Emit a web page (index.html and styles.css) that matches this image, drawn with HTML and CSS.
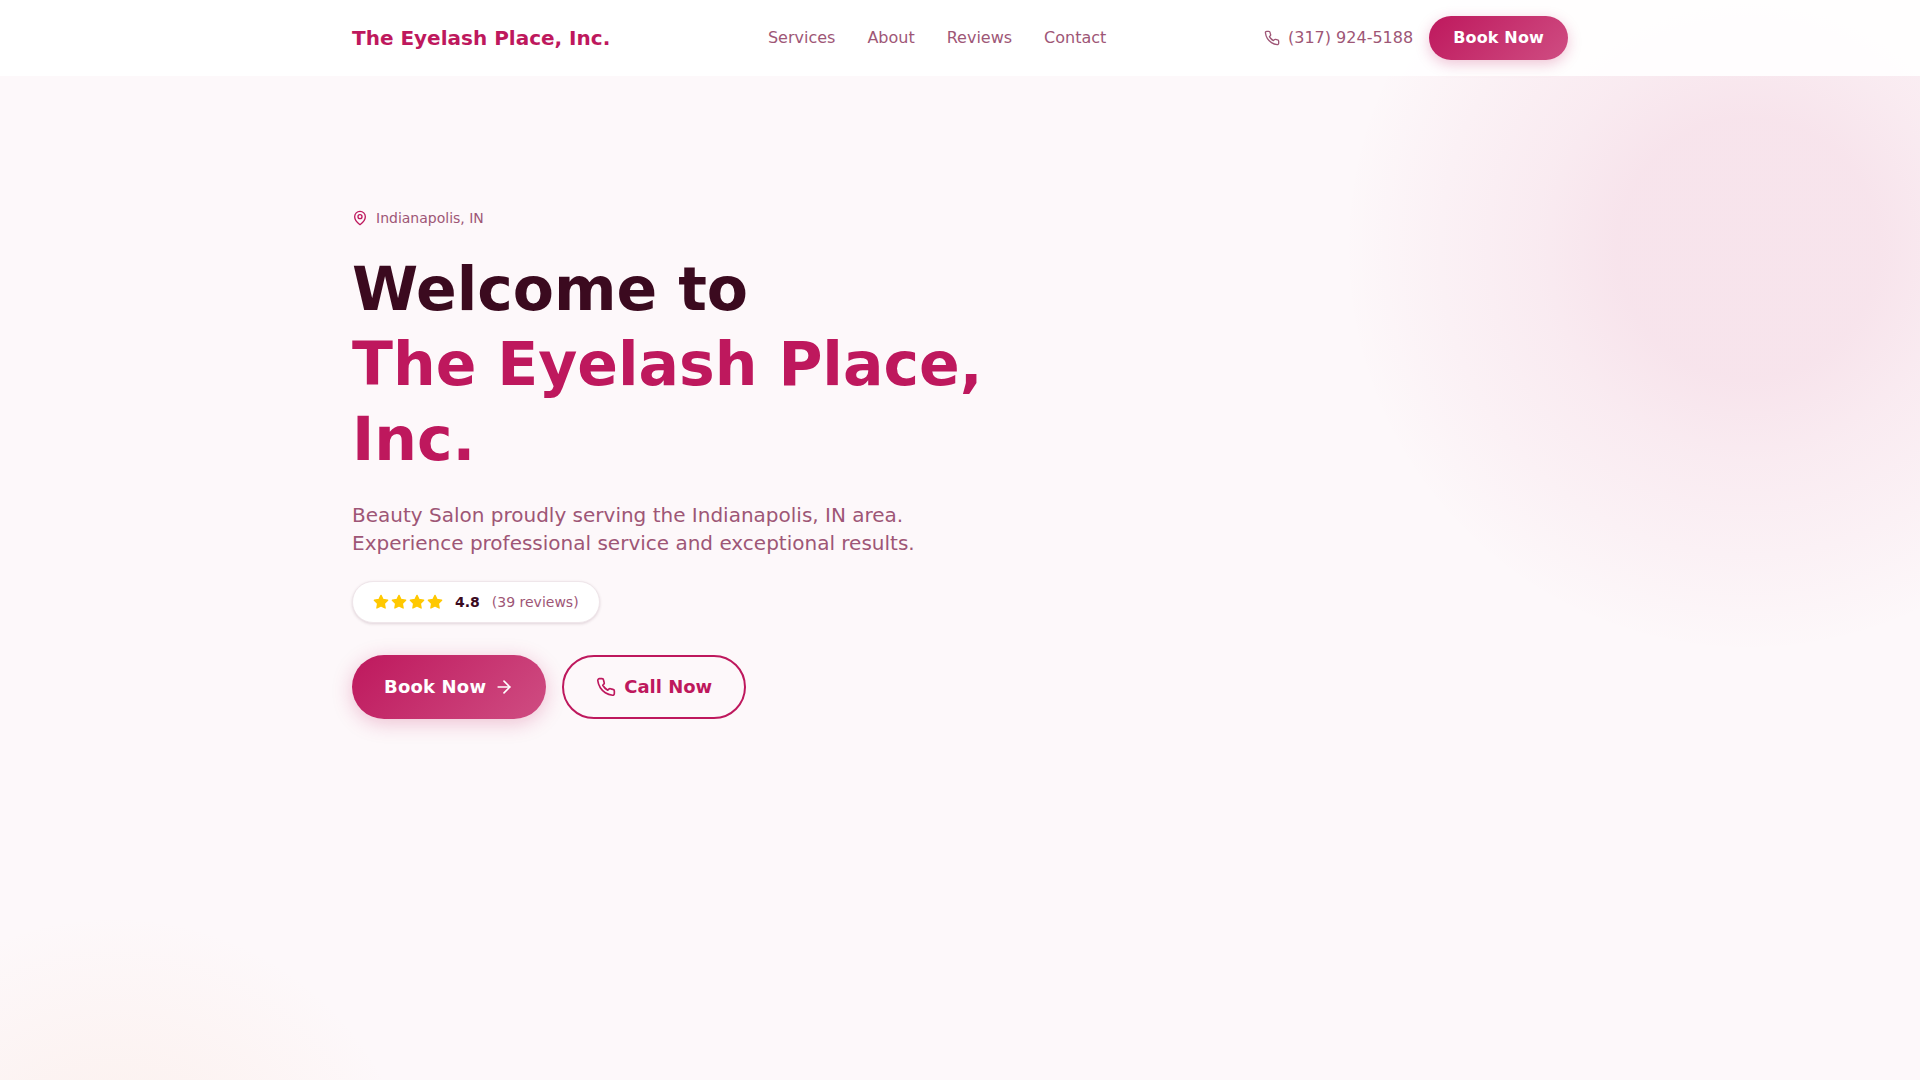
FILE: index.html
```html
<!DOCTYPE html>
<html lang="en">
<head>
  <meta charset="UTF-8">
  <meta name="viewport" content="width=device-width, initial-scale=1.0">
  <title>The Eyelash Place, Inc.</title>
  <link rel="stylesheet" href="styles.css">
</head>
<body>
  <header class="header">
    <div class="wrapper header-row">
      <a class="logo" href="#">The Eyelash Place, Inc.</a>
      <nav class="nav">
        <a href="#">Services</a>
        <a href="#">About</a>
        <a href="#">Reviews</a>
        <a href="#">Contact</a>
      </nav>
      <div class="header-right">
        <a class="phone" href="#">
          <svg class="icon icon-16" viewBox="0 0 24 24"><path d="M22 16.92v3a2 2 0 0 1-2.18 2 19.79 19.79 0 0 1-8.63-3.07 19.5 19.5 0 0 1-6-6 19.79 19.79 0 0 1-3.07-8.67A2 2 0 0 1 4.11 2h3a2 2 0 0 1 2 1.72 12.84 12.84 0 0 0 .7 2.81 2 2 0 0 1-.45 2.11L8.09 9.91a16 16 0 0 0 6 6l1.27-1.27a2 2 0 0 1 2.11-.45 12.84 12.84 0 0 0 2.81.7A2 2 0 0 1 22 16.92z"/></svg>
          (317) 924-5188
        </a>
        <a class="btn btn-small" href="#">Book Now</a>
      </div>
    </div>
  </header>

  <main class="wrapper hero">
    <div class="location">
      <svg class="icon icon-16" viewBox="0 0 24 24"><path d="M20 10c0 6-8 12-8 12s-8-6-8-12a8 8 0 0 1 16 0Z"/><circle cx="12" cy="10" r="3"/></svg>
      Indianapolis, IN
    </div>
    <h1 class="title">Welcome to <span>The Eyelash Place, Inc.</span></h1>
    <p class="intro">Beauty Salon proudly serving the Indianapolis, IN area. Experience professional service and exceptional results.</p>
    <div class="rating">
      <span class="stars">
        <svg viewBox="0 0 24 24"><polygon points="12 2 15.09 8.26 22 9.27 17 14.14 18.18 21.02 12 17.77 5.82 21.02 7 14.14 2 9.27 8.91 8.26 12 2"/></svg>
        <svg viewBox="0 0 24 24"><polygon points="12 2 15.09 8.26 22 9.27 17 14.14 18.18 21.02 12 17.77 5.82 21.02 7 14.14 2 9.27 8.91 8.26 12 2"/></svg>
        <svg viewBox="0 0 24 24"><polygon points="12 2 15.09 8.26 22 9.27 17 14.14 18.18 21.02 12 17.77 5.82 21.02 7 14.14 2 9.27 8.91 8.26 12 2"/></svg>
        <svg viewBox="0 0 24 24"><polygon points="12 2 15.09 8.26 22 9.27 17 14.14 18.18 21.02 12 17.77 5.82 21.02 7 14.14 2 9.27 8.91 8.26 12 2"/></svg>
      </span>
      <strong>4.8</strong>
      <span class="count">(39 reviews)</span>
    </div>
    <div class="actions">
      <a class="btn btn-large" href="#">
        Book Now
        <svg class="icon icon-20" viewBox="0 0 24 24"><path d="M5 12h14"/><path d="m12 5 7 7-7 7"/></svg>
      </a>
      <a class="btn-outline" href="#">
        <svg class="icon icon-20" viewBox="0 0 24 24"><path d="M22 16.92v3a2 2 0 0 1-2.18 2 19.79 19.79 0 0 1-8.63-3.07 19.5 19.5 0 0 1-6-6 19.79 19.79 0 0 1-3.07-8.67A2 2 0 0 1 4.11 2h3a2 2 0 0 1 2 1.72 12.84 12.84 0 0 0 .7 2.81 2 2 0 0 1-.45 2.11L8.09 9.91a16 16 0 0 0 6 6l1.27-1.27a2 2 0 0 1 2.11-.45 12.84 12.84 0 0 0 2.81.7A2 2 0 0 1 22 16.92z"/></svg>
        Call Now
      </a>
    </div>
  </main>
</body>
</html>
```

FILE: styles.css
```css
html, body {
  margin: 0;
  padding: 0;
}

body {
  min-height: 100vh;
  overflow: hidden;
  font-family: "DejaVu Sans", sans-serif;
  line-height: 24px;
  color: #3b0a1f;
  background-color: #fdf8fa;
  background-image:
    radial-gradient(circle 405px at 1748px 248px, rgba(190,24,93,.09) 0%, rgba(190,24,93,.09) 32%, rgba(190,24,93,.06) 52%, rgba(190,24,93,.032) 76%, rgba(190,24,93,0) 100%),
    radial-gradient(circle 310px at 114px 1225px, rgba(240,170,120,.13) 0%, rgba(240,170,120,0) 100%);
  background-repeat: no-repeat;
}

a {
  color: inherit;
  text-decoration: none;
}

.wrapper {
  width: 1216px;
  margin: 0 auto;
}

.icon {
  fill: none;
  stroke: currentColor;
  stroke-width: 2;
  stroke-linecap: round;
  stroke-linejoin: round;
  flex-shrink: 0;
}
.icon-16 {
  width: 16px;
  height: 16px;
}
.icon-20 {
  width: 20px;
  height: 20px;
}

.header {
  height: 76px;
  background: rgba(255,255,255,.9);
}
.header-row {
  height: 100%;
  display: flex;
  align-items: center;
  justify-content: space-between;
}
.logo {
  font-size: 20px;
  line-height: 28px;
  font-weight: 700;
  color: #be185d;
}
.nav {
  display: flex;
  gap: 32px;
  font-size: 16px;
  color: #9e5676;
}
.header-right {
  display: flex;
  align-items: center;
  gap: 16px;
}
.phone {
  display: flex;
  align-items: center;
  gap: 8px;
  font-size: 16px;
  color: #9e5676;
}

.btn {
  display: flex;
  align-items: center;
  color: #fff;
  font-weight: 700;
  letter-spacing: .01em;
  border-radius: 999px;
  background: linear-gradient(135deg, #be185d, #cf4d82);
}
.btn-small {
  height: 44px;
  padding: 0 24px;
  font-size: 16px;
  box-shadow: 0 4px 14px rgba(190,24,93,.25);
}
.btn-large {
  height: 64px;
  padding: 0 32px;
  gap: 8px;
  font-size: 18px;
  line-height: 28px;
  box-shadow: 0 4px 20px rgba(190,24,93,.25);
}
.btn-outline {
  display: flex;
  align-items: center;
  gap: 8px;
  height: 64px;
  padding: 0 32px;
  box-sizing: border-box;
  border: 2px solid #be185d;
  border-radius: 999px;
  font-size: 18px;
  line-height: 28px;
  font-weight: 700;
  color: #be185d;
}

.hero {
  padding-top: 132px;
}
.location {
  display: flex;
  align-items: center;
  gap: 8px;
  height: 20px;
  font-size: 14px;
  line-height: 20px;
  color: #9e5676;
}
.location .icon {
  color: #be185d;
}
.title {
  width: 672px;
  margin: 24px 0 24px;
  font-size: 60px;
  line-height: 75px;
  font-weight: 700;
}
.title span {
  display: block;
  color: #be185d;
}
.intro {
  width: 600px;
  margin: 0 0 24px;
  font-size: 20px;
  line-height: 28px;
  color: #9e5676;
}
.rating {
  display: inline-flex;
  align-items: center;
  gap: 12px;
  height: 42px;
  padding: 0 20px;
  box-sizing: border-box;
  background: #fff;
  border: 1px solid #efe6ea;
  border-radius: 999px;
  box-shadow: 0 1px 3px rgba(59,10,31,.15);
  font-size: 14px;
  line-height: 20px;
}
.stars {
  display: flex;
  gap: 2px;
}
.stars svg {
  width: 16px;
  height: 16px;
  fill: #ffc800;
  stroke: #ffc800;
  stroke-width: 2;
  stroke-linejoin: round;
}
.count {
  color: #9e5676;
}
.actions {
  display: flex;
  gap: 16px;
  margin-top: 32px;
}
```
